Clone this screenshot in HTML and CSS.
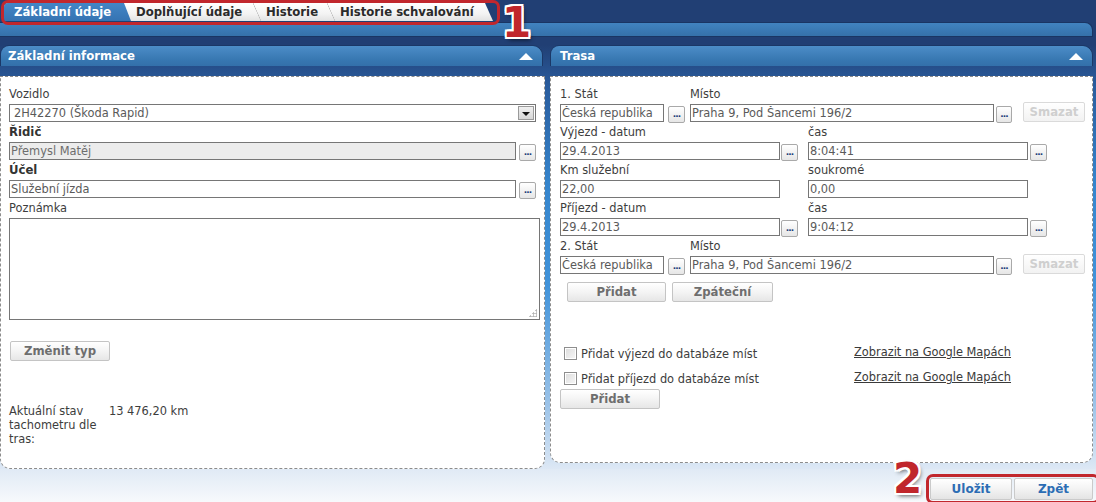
FILE: index.html
```html
<!DOCTYPE html>
<html lang="cs">
<head>
<meta charset="utf-8">
<title>Jízda – Základní údaje</title>
<link rel="stylesheet" href="styles.css">
</head>
<body>
<div class="page">
<div class="top">
  <div class="tabbar">
    <nav class="tabs">
      <a class="tab tab-active">Základní údaje</a>
      <a class="tab tab-sep">Doplňující údaje</a>
      <a class="tab tab-sep">Historie</a>
      <a class="tab tab-sep tab-last">Historie schvalování</a>
    </nav>
    <span class="callout-box callout-tabs"></span>
    <span class="callout-num callout-num-1">1</span>
  </div>
  <div class="strip"></div>
</div>

<main class="panels">
  <section class="panel panel-left">
    <header class="phead"><span class="ptitle">Základní informace</span><span class="tri"></span></header>
    <div class="pbody pbody-left">
      <div class="lbl">Vozidlo</div>
      <div class="select"><span class="select-val">2H42270 (Škoda Rapid)</span><span class="select-btn"><span class="down"></span></span></div>
      <div class="lbl lbl-b">Řidič</div>
      <div class="frow"><input class="inp inp-wide inp-dis" value="Přemysl Matěj" readonly><button class="dots">...</button></div>
      <div class="lbl lbl-b">Účel</div>
      <div class="frow"><input class="inp inp-wide" value="Služební jízda" readonly><button class="dots">...</button></div>
      <div class="lbl">Poznámka</div>
      <div class="note"><textarea class="note-area"></textarea><span class="grip"></span></div>
      <button class="btn btn-change">Změnit typ</button>
      <div class="tacho">
        <div class="tacho-lbl">Aktuální stav tachometru dle tras:</div>
        <div class="tacho-val">13 476,20 km</div>
      </div>
    </div>
  </section>

  <section class="panel panel-right">
    <header class="phead"><span class="ptitle">Trasa</span><span class="tri"></span></header>
    <div class="pbody pbody-right">
      <div class="lrow"><span class="l-state">1. Stát</span><span>Místo</span></div>
      <div class="frow">
        <input class="inp inp-state" value="Česká republika" readonly><button class="dots dots-state">...</button>
        <input class="inp inp-place" value="Praha 9, Pod Šancemi 196/2" readonly><button class="dots dots-place">...</button>
        <button class="btn btn-del" disabled>Smazat</button>
      </div>
      <div class="lrow"><span class="l-col">Výjezd - datum</span><span>čas</span></div>
      <div class="frow">
        <div class="col"><input class="inp inp-half" value="29.4.2013" readonly><button class="dots dots-half">...</button></div>
        <div class="col"><input class="inp inp-half" value="8:04:41" readonly><button class="dots dots-half2">...</button></div>
      </div>
      <div class="lrow"><span class="l-col">Km služební</span><span>soukromé</span></div>
      <div class="frow">
        <div class="col"><input class="inp inp-half" value="22,00" readonly></div>
        <div class="col"><input class="inp inp-half" value="0,00" readonly></div>
      </div>
      <div class="lrow"><span class="l-col">Příjezd - datum</span><span>čas</span></div>
      <div class="frow">
        <div class="col"><input class="inp inp-half" value="29.4.2013" readonly><button class="dots dots-half">...</button></div>
        <div class="col"><input class="inp inp-half" value="9:04:12" readonly><button class="dots dots-half2">...</button></div>
      </div>
      <div class="lrow"><span class="l-state">2. Stát</span><span>Místo</span></div>
      <div class="frow">
        <input class="inp inp-state" value="Česká republika" readonly><button class="dots dots-state">...</button>
        <input class="inp inp-place" value="Praha 9, Pod Šancemi 196/2" readonly><button class="dots dots-place">...</button>
        <button class="btn btn-del" disabled>Smazat</button>
      </div>
      <div class="brow">
        <button class="btn btn-add">Přidat</button>
        <button class="btn btn-back">Zpáteční</button>
      </div>
      <div class="chkrow">
        <label class="chk"><span class="box"></span>Přidat výjezd do databáze míst</label>
        <a class="maplink">Zobrazit na Google Mapách</a>
      </div>
      <div class="chkrow">
        <label class="chk"><span class="box"></span>Přidat příjezd do databáze míst</label>
        <a class="maplink">Zobrazit na Google Mapách</a>
      </div>
      <button class="btn btn-add2">Přidat</button>
    </div>
  </section>
</main>

<footer class="footer">
  <div class="actions"><button class="abtn abtn-save">Uložit</button><button class="abtn abtn-back">Zpět</button></div>
  <span class="callout-box callout-actions"></span>
  <span class="callout-num callout-num-2">2</span>
</footer>
</div>
</body>
</html>
```

FILE: styles.css
```css
* { box-sizing: border-box; }
html, body {
  margin: 0;
  padding: 0;
  background: #f6f8fc;
}
body {
  font-family: "DejaVu Sans", Verdana, sans-serif;
  font-size: 11.4px;
  color: #3d3d3d;
}
.page {
  width: 1096px;
  height: 502px;
  overflow: hidden;
  position: relative;
  background: #eef3f9;
}

/* ---------- top tabs ---------- */
.top { height: 45px; background: #213f74; }
.tabbar {
  height: 23px;
  padding: 3px 0 0 4px;
  position: relative;
}
.tabs {
  display: flex;
  height: 18px;
  width: 489px;
  background: linear-gradient(#ffffff, #f3f3f3 60%, #e2e2e2);
  clip-path: polygon(0 0, calc(100% - 8px) 0, 100% 100%, 0 100%);
  border-radius: 4px 0 0 0;
}
.tab {
  position: relative;
  display: flex;
  align-items: center;
  height: 18px;
  font-weight: bold;
  font-size: 11.7px;
  color: #2b2b2b;
  white-space: nowrap;
}
.tab-active {
  width: 127px;
  padding-left: 10px;
  color: #fff;
  background: linear-gradient(#4386c6, #3573b2);
  clip-path: polygon(0 0, calc(100% - 7px) 0, 100% 100%, 0 100%);
  border-radius: 4px 0 0 0;
}
.tab-sep:nth-child(2) { width: 126px; padding-left: 5px; }
.tab-sep:nth-child(3) { width: 74px; padding-left: 9px; }
.tab-last { width: 162px; padding-left: 9px; }
.tab-sep:nth-child(3)::before,
.tab-sep:nth-child(4)::before {
  content: "";
  position: absolute;
  left: -4px;
  top: 0;
  width: 8px;
  height: 18px;
  background: linear-gradient(to bottom left, transparent 46%, #b9b9b9 50%, transparent 54%);
}
.strip {
  height: 15px;
  width: 1093px;
  margin-top: -1px;
  background: linear-gradient(#4183c0, #3571aa);
  border: 1px solid #1a3563;
  border-left: none;
  border-radius: 0 8px 0 0;
}

/* callouts (annotation overlays) */
.callout-box {
  position: absolute;
  border: 3px solid #c1272d;
  border-radius: 7px;
  pointer-events: none;
}
.callout-tabs { left: 1px; top: 0; width: 499px; height: 25px; }
.callout-num {
  position: absolute;
  z-index: 3;
  font-family: "DejaVu Sans", sans-serif;
  font-weight: bold;
  font-size: 42px;
  line-height: 48px;
  color: #c0262c;
  text-shadow:
    2px 0 0 #fff, -2px 0 0 #fff, 0 2px 0 #fff, 0 -2px 0 #fff,
    2px 2px 0 #fff, -2px -2px 0 #fff, 2px -2px 0 #fff, -2px 2px 0 #fff,
    2px 3px 4px rgba(0,0,0,.6);
}
.callout-num-1 { left: 502px; top: -1px; }

/* ---------- panels ---------- */
.panels {
  display: flex;
  align-items: flex-start;
  gap: 5px;
  height: 424px;
  background: linear-gradient(to bottom, #213f74 0px, #2a5c9d 40px, #3585cd 140px, #4193da 240px, #9cc3e8 360px, #dde8f5 424px);
}
.panel-left { width: 545px; }
.panel-right { width: 543px; }
.phead {
  height: 21px;
  margin-bottom: 10px;
  display: flex;
  align-items: center;
  justify-content: space-between;
  padding: 0 9px 0 7px;
  border: 1px solid #1b3867;
  border-bottom: none;
  border-radius: 9px 10px 0 0;
  background: linear-gradient(#4c8dc8, #3777b1 70%, #3370aa);
  color: #fff;
  font-weight: bold;
  font-size: 11.7px;
}
.panel-left .phead { margin-right: 2px; }
.panel-right .phead { padding-left: 9px; }
.tri {
  width: 0; height: 0;
  border-left: 7px solid transparent;
  border-right: 7px solid transparent;
  border-bottom: 7px solid #fff;
}
.pbody {
  background: #fff;
  border: 1px dashed #8c8c8c;
  border-radius: 0 0 10px 10px;
  padding-top: 9px;
}
.pbody-left { height: 393px; padding-left: 8px; }
.pbody-right { height: 387px; padding-left: 9px; }

.lbl, .lrow {
  height: 16px;
  line-height: 16px;
  margin-bottom: 2px;
  white-space: nowrap;
}
.lbl-b { font-weight: bold; font-size: 11.7px; color: #333; }
.lrow { display: flex; }
.l-state { width: 130px; }
.l-col { width: 248px; }

.frow {
  display: flex;
  align-items: flex-end;
  height: 18px;
  margin-bottom: 2px;
}
.col { display: flex; align-items: flex-end; width: 248px; }

.inp {
  height: 18px;
  border: 1px solid #767676;
  padding: 0 1px;
  font-family: "DejaVu Sans", Verdana, sans-serif;
  font-size: 11.4px;
  color: #5a5a5a;
  background: #fff;
  outline: none;
  margin: 0;
}
.inp-wide { width: 507px; }
.inp-dis { background: #ececec; color: #6d6d6d; }
.inp-state { width: 104px; }
.inp-place { width: 304px; margin-left: 5px; }
.inp-half { width: 220px; }

.dots {
  width: 17px;
  height: 17px;
  margin: 0 0 -1px 3px;
  padding: 0 0 3px;
  border: 1px solid #a9a9a9;
  border-radius: 2px;
  background: linear-gradient(#ffffff, #e6e6e6);
  font-family: "DejaVu Sans", sans-serif;
  font-size: 9px;
  font-weight: bold;
  line-height: 9px;
  letter-spacing: -1px;
  color: #1c3b78;
  display: flex;
  align-items: flex-end;
  justify-content: center;
}
.dots-state { margin-left: 4px; }
.dots-place { margin-left: 2px; width: 16px; }
.dots-half { margin-left: 1px; }
.dots-half2 { margin-left: 2px; }

.select {
  width: 527px;
  height: 18px;
  border: 1px solid #767676;
  display: flex;
  align-items: center;
  justify-content: space-between;
  padding: 0 1px 0 4px;
  margin-bottom: 2px;
  color: #5a5a5a;
}
.select-btn {
  width: 16px;
  height: 14px;
  border: 1px solid #9a9a9a;
  background: linear-gradient(#f0f0f0, #d6d6d6);
  display: flex;
  align-items: center;
  justify-content: center;
}
.down {
  width: 0; height: 0;
  border-left: 4px solid transparent;
  border-right: 4px solid transparent;
  border-top: 4px solid #111;
  margin-top: 1px;
}

.note { position: relative; width: 531px; height: 102px; }
.note-area {
  display: block;
  width: 531px;
  height: 102px;
  border: 1px solid #767676;
  resize: none;
  margin: 0;
  outline: none;
}
.grip {
  position: absolute;
  right: 3px;
  bottom: 3px;
  width: 8px;
  height: 8px;
  background:
    radial-gradient(circle, #b5b5b5 45%, transparent 55%) 6px 0 / 3px 3px no-repeat,
    radial-gradient(circle, #b5b5b5 45%, transparent 55%) 3px 3px / 3px 3px no-repeat,
    radial-gradient(circle, #b5b5b5 45%, transparent 55%) 6px 3px / 3px 3px no-repeat,
    radial-gradient(circle, #b5b5b5 45%, transparent 55%) 0 6px / 3px 3px no-repeat,
    radial-gradient(circle, #b5b5b5 45%, transparent 55%) 3px 6px / 3px 3px no-repeat,
    radial-gradient(circle, #b5b5b5 45%, transparent 55%) 6px 6px / 3px 3px no-repeat;
}

.btn {
  display: block;
  height: 20px;
  margin: 0;
  padding: 0;
  border: 1px solid #c4c4c4;
  border-radius: 2px;
  background: linear-gradient(#ffffff, #f4f4f4 50%, #e6e6e6);
  font-family: "DejaVu Sans", Verdana, sans-serif;
  font-size: 11.7px;
  font-weight: bold;
  color: #6e6e6e;
}
.btn-change { width: 100px; margin: 21px 0 0 1px; }
.btn-del {
  width: 62px;
  height: 20px;
  margin-left: 11px;
  margin-bottom: 0;
  color: #cfcfcf;
  border-color: #dadada;
  background: linear-gradient(#ffffff, #f2f2f2);
}
.brow { display: flex; gap: 6px; margin: 8px 0 0 7px; }
.btn-add { width: 99px; }
.btn-back { width: 101px; }

.chkrow {
  display: flex;
  align-items: center;
  height: 21px;
  margin-top: 4px;
}
.brow + .chkrow { margin-top: 41px; }
.chk {
  display: flex;
  align-items: center;
  width: 294px;
  padding-left: 4px;
  color: #3d3d3d;
}
.box {
  width: 13px;
  height: 13px;
  margin-right: 4px;
  border: 1px solid #8e8e8e;
  background: linear-gradient(135deg, #dcdcdc, #f7f7f7);
  box-shadow: inset 0 0 0 1px #fff;
}
.maplink {
  color: #3a3a3a;
  text-decoration: underline;
  margin-top: -3px;
}
.btn-add2 { width: 100px; height: 20px; margin-top: 0; }

.tacho {
  display: flex;
  margin-top: 43px;
  line-height: 14px;
}
.tacho-lbl { width: 100px; }
.tacho-val { white-space: nowrap; }

/* ---------- footer ---------- */
.footer {
  position: relative;
  height: 33px;
  display: flex;
  justify-content: flex-end;
  padding: 9px 3px 0 0;
  background: linear-gradient(#e0eaf5, #f7f9fc);
}
.actions { display: flex; gap: 2px; }
.abtn {
  height: 22px;
  margin: 0;
  padding: 0;
  border: 1px solid #cacaca;
  border-radius: 2px;
  background: linear-gradient(#ffffff, #f3f3f3 50%, #e4e4e4);
  font-family: "DejaVu Sans", Verdana, sans-serif;
  font-size: 12px;
  font-weight: bold;
  color: #2c6db4;
}
.abtn-save { width: 82px; }
.abtn-back { width: 79px; }
.callout-actions { left: 926px; top: 5px; width: 174px; height: 30px; }
.callout-num-2 { left: 893px; top: -14px; }
```
